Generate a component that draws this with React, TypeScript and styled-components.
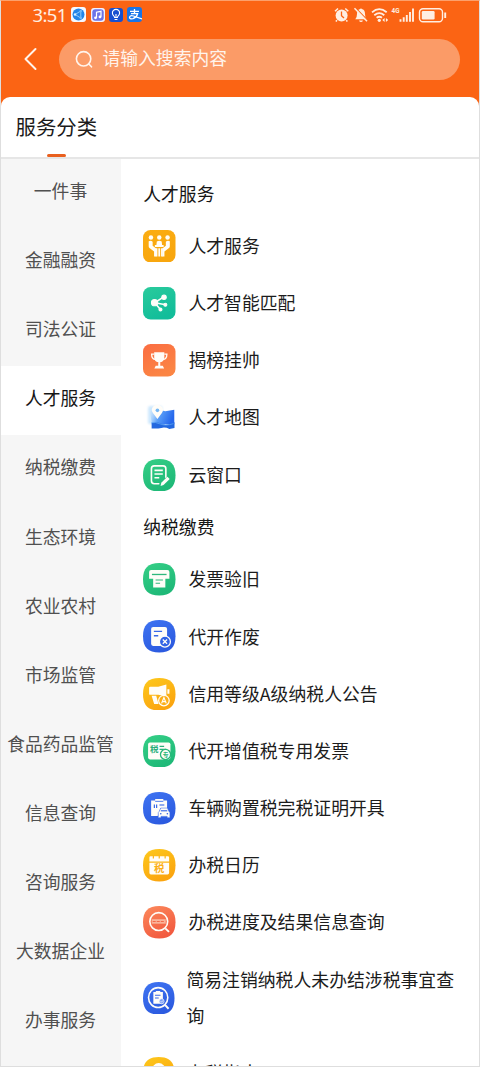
import React from 'react';
import styled, { createGlobalStyle } from 'styled-components';

const Global = createGlobalStyle`
  * { box-sizing: border-box; }
  body { margin: 0; font-family: "Noto Sans CJK SC", "Noto Sans", sans-serif; }
`;

const Screen = styled.div`
  width: 480px;
  height: 1067px;
  overflow: hidden;
  display: flex;
  flex-direction: column;
  background: #fb6414;
  border: 1px solid #dedede;
  border-top-color: #fca06c;
`;

const StatusBar = styled.div`
  height: 29px;
  flex: none;
  display: flex;
  align-items: center;
  justify-content: space-between;
  padding: 0 31px 2px 31.5px;
  color: #ffeee2;
`;

const StatusGroup = styled.div<{ $gap: number }>`
  display: flex;
  align-items: center;
  gap: ${p => p.$gap}px;
  svg { display: block; }
`;

const Clock = styled.span`
  font: 400 18.5px/28px "Noto Sans", sans-serif;
  letter-spacing: -0.6px;
  margin-right: 0;
`;

const SearchRow = styled.div`
  height: 67px;
  flex: none;
  display: flex;
  align-items: flex-start;
  padding: 8.5px 19px 0 20px;
`;

const Back = styled.svg`
  width: 18px;
  height: 24px;
  margin: 8px 19.5px 0 0;
`;

const SearchBox = styled.div`
  flex: 1;
  height: 41px;
  border-radius: 21px;
  background: #fb9b67;
  display: flex;
  align-items: center;
  gap: 9px;
  padding-left: 16px;
  color: #fff4ec;
  font-size: 17.8px;
  line-height: 37px;
`;

const SearchHint = styled.span`
  padding-bottom: 3px;
`;

const Sheet = styled.div`
  flex: 1;
  min-height: 0;
  display: flex;
  flex-direction: column;
  background: #fff;
  border-radius: 9px 9px 0 0;
`;

const TitleBar = styled.div`
  height: 62px;
  flex: none;
  display: flex;
  flex-direction: column;
  justify-content: space-between;
  padding-left: 14.5px;
  border-bottom: 2px solid #e6e6e6;
`;

const Title = styled.div`
  font-size: 20.4px;
  line-height: 58px;
  height: 56px;
  color: #1a1a1a;
`;

const Marker = styled.div`
  width: 19px;
  height: 3px;
  flex: none;
  margin-left: 31px;
  border-radius: 2px;
  background: #e9601f;
`;

const Body = styled.div`
  flex: 1;
  min-height: 0;
  display: flex;
`;

const Sidebar = styled.div`
  width: 120px;
  flex: none;
  background: #f6f6f6;
  overflow: hidden;
`;

const Category = styled.div<{ $active?: boolean }>`
  height: 69.1px;
  padding: 0 1px 7px 0;
  display: flex;
  align-items: center;
  justify-content: center;
  white-space: nowrap;
  font-size: 17.8px;
  color: ${p => (p.$active ? '#161616' : '#505050')};
  background: ${p => (p.$active ? '#fff' : 'transparent')};
`;

const List = styled.div`
  flex: 1;
  min-width: 0;
  overflow: hidden;
  padding: 11px 20px 0 22.3px;
`;

const Heading = styled.div`
  height: 47.5px;
  font-size: 17.8px;
  line-height: 46.5px;
  color: #161616;
`;

const Item = styled.div<{ $wide?: boolean }>`
  display: flex;
  align-items: center;
  gap: ${p => (p.$wide ? 11.6 : 12.6)}px;
  padding: 10.6px 0;
  font-size: 17.85px;
  line-height: 36px;
  color: #1c1c1c;
`;

const Badge = styled.svg<{ $w?: number }>`
  width: ${p => p.$w ?? 32.5}px;
  height: 32.5px;
  flex: none;
  display: block;
`;

const Label = styled.span`
  position: relative;
  top: -1.2px;
`;

type Tone = 'amber' | 'teal' | 'coral' | 'green' | 'blue' | 'yellow' | 'red';
const tones: Record<Tone, [string, string]> = {
  amber: ['#fbad12', '#f8a60e'],
  teal: ['#2acb9c', '#12bd9a'],
  coral: ['#fb6d42', '#fb8544'],
  green: ['#35cf86', '#1fb978'],
  blue: ['#3f74f2', '#2c5be0'],
  yellow: ['#fdc91c', '#fba50f'],
  red: ['#fc8a5c', '#f25b40'],
};

const squircle = 'M16 0C27 0 32 5 32 16S27 32 16 32S0 27 0 16S5 0 16 0Z';

function Icon({ tone, square, narrow, children }: { tone: Tone; square?: boolean; narrow?: boolean; children: React.ReactNode }) {
  const id = `g-${tone}`;
  return (
    <Badge viewBox="0 0 32 32" $w={narrow ? 31.5 : 32.5} preserveAspectRatio="none">
      <defs>
        <linearGradient id={id} x1="0" y1="0" x2="0.5" y2="1">
          <stop offset="0" stopColor={tones[tone][0]} />
          <stop offset="1" stopColor={tones[tone][1]} />
        </linearGradient>
      </defs>
      {square ? <rect width="32" height="32" rx="7.5" fill={`url(#${id})`} /> : <path d={squircle} fill={`url(#${id})`} />}
      {children}
    </Badge>
  );
}

const W = '#fffdf8';

const PeopleIcon = () => (
  <Icon tone="amber" square>
    <g fill={W}>
      <circle cx="7.8" cy="7.4" r="2.2" /><circle cx="16" cy="7.4" r="2.2" /><circle cx="24.2" cy="7.4" r="2.2" />
      <path d="M5.6 11Q7.8 9.8 9.5 11.5V15.5L13 18.3V26H10.9V21.2L6.4 17.7Q5.6 17 5.6 16Z" />
      <path d="M26.4 11Q24.2 9.8 22.5 11.5V15.5L19 18.3V26H21.1V21.2L25.6 17.7Q26.4 17 26.4 16Z" />
      <path d="M13.6 11.4Q16 9.6 18.4 11.4L18.8 14.8H20.3V16.8H11.7V14.8H13.2Z" />
      <path d="M12.6 18H14.2V26H12.6ZM15.1 18H16.9V26H15.1ZM17.8 18H19.4V26H17.8Z" />
    </g>
  </Icon>
);

const ShareIcon = () => (
  <Icon tone="teal" square>
    <g fill={W} stroke={W}>
      <path d="M11.5 15.5L20.5 9.7M11.5 15.5L21 17.3M11.5 15.5L17 22" strokeWidth="1.6" />
      <circle cx="11.4" cy="15.4" r="3.1" /><circle cx="20.7" cy="10" r="2.2" />
      <circle cx="22" cy="17.5" r="1.5" /><circle cx="17.2" cy="22.2" r="1.5" />
    </g>
  </Icon>
);

const TrophyIcon = () => (
  <Icon tone="coral" square>
    <path d="M11 8.2H21V13Q21 18 16 18T11 13ZM15 17.5H17V21.5H15ZM12.5 21.3H19.5L20.8 24H11.2Z" fill={W} />
    <path d="M11 10H8.5Q8.5 15 12.3 15M21 10H23.5Q23.5 15 19.7 15" fill="none" stroke={W} strokeWidth="1.3" />
  </Icon>
);

const MapIcon = () => (
  <Badge viewBox="0 0 32 32">
    <defs>
      <linearGradient id="map" x1="0" y1="0" x2="1" y2="0.3">
        <stop offset="0" stopColor="#c9e7ff" stopOpacity="0.3" />
        <stop offset="0.45" stopColor="#5a9ff8" />
        <stop offset="1" stopColor="#2567ec" />
      </linearGradient>
      <filter id="halo"><feGaussianBlur stdDeviation="1.2" /></filter>
    </defs>
    <rect x="5" y="5" width="14" height="18" rx="2" fill="#b4dcfc" opacity=".65" filter="url(#halo)" />
    <path d="M7 10L13 8L22 10.2L30.8 8.5V23L22 23L9 25Z" fill="url(#map)" />
    <path d="M8.5 21.5Q13 20 17 22T25 23L31 21V26.5L26 27.5Q22 25.5 18 26.5T8.5 27Z" fill="#2368df" />
    <path d="M8 21.4Q12 20.4 17 22.6T30 22.3" fill="none" stroke="#6db6fb" strokeWidth=".6" />
    <path d="M14.2 17.8L9.8 11.9A5.3 5.3 0 1 1 18.6 11.9Z" fill={W} />
    <circle cx="14.2" cy="9.2" r="1.8" fill="#75b7f4" />
  </Badge>
);

const NoteIcon = () => (
  <Icon tone="green">
    <path d="M22.5 18V9.5Q22.5 6.8 19.8 6.8H11Q8.3 6.8 8.3 9.5V21.5Q8.3 24.4 11 24.4H15.5" fill="none" stroke={W} strokeWidth="1.6" strokeLinecap="round" />
    <path d="M11.3 11.2H19.5M11.3 14.8H19.5M11.3 18.4H16" stroke={W} strokeWidth="1.5" />
    <path d="M17.3 26.6L18 23.4L24 17.4L26.3 19.7L20.2 25.7Z" fill={W} />
  </Icon>
);

const PrinterIcon = () => (
  <Icon tone="green">
    <path d="M8 6.8H24Q26 6.8 26 8.8V15.5H22V24H10V15.5H6V8.8Q6 6.8 8 6.8Z" fill={W} />
    <path d="M8.8 11.3H23.2" stroke="#30b87d" strokeWidth="1.3" />
    <path d="M12.4 16.8H19.6M12.4 20H16.8" stroke="#30b87d" strokeWidth="1.1" />
  </Icon>
);

const VoidIcon = () => (
  <Icon tone="blue">
    <path d="M10 6.8H21.7Q23.7 6.8 23.7 8.8V25.5H10Q8 25.5 8 23.5V8.8Q8 6.8 10 6.8Z" fill={W} />
    <path d="M10.7 11.2H18.8M10.7 15.5H15" stroke="#3868e8" strokeWidth="1.3" />
    <circle cx="21.6" cy="21.3" r="5.4" fill="#3263e5" stroke={W} strokeWidth="1.2" />
    <path d="M19.5 19.2L23.7 23.4M23.7 19.2L19.5 23.4" stroke={W} strokeWidth="1.3" />
  </Icon>
);

const MegaphoneIcon = () => (
  <Icon tone="yellow">
    <path d="M7.2 8.5H15L23 6.3V18.2L15 16.6H7.2Q6 16.6 6 15.4V9.7Q6 8.5 7.2 8.5ZM24 11H26V15.5H24ZM8.5 17.5H13L15.3 25.5H11Z" fill={W} />
    <circle cx="20.6" cy="22.2" r="5.2" fill="#fcaf18" stroke={W} strokeWidth="1.2" />
    <path d="M18.3 25L20.6 19.3L22.9 25M19.1 23.2H22.1" stroke={W} strokeWidth="1.2" fill="none" />
  </Icon>
);

const IconText = styled.text`
  font-family: "Noto Sans CJK SC", sans-serif;
  font-weight: 700;
`;

const InvoiceIcon = () => (
  <Icon tone="green">
    <rect x="5" y="7.3" width="22" height="16.7" rx="1.8" fill={W} />
    <IconText x="7" y="17" fontSize="8.4" fill="#2aaf7b">税</IconText>
    <path d="M16.3 11.2H20.8M16.3 14.2H23" stroke="#2aaf7b" strokeWidth="1.3" />
    <circle cx="22.2" cy="19.2" r="5" fill={W} stroke="#27b779" strokeWidth="1.3" />
    <IconText x="19.4" y="21.4" fontSize="5.7" fill="#27b779">专</IconText>
  </Icon>
);

const CarIcon = () => (
  <Icon tone="blue">
    <path d="M8 8.3H12V6.8H20V8.3H23.7V16H17L14.5 23.7H8Z" fill={W} />
    <path d="M12 9.2H20" stroke="#4f7fee" strokeWidth="1" />
    <path d="M11.2 12.2V15.8M13.4 12.2V15.8" stroke="#386bea" strokeWidth="1.2" />
    <path d="M16.2 12.8H21" stroke="#386bea" strokeWidth="1.1" />
    <path d="M16 19L17.5 15.8H24L25.5 19L26.5 20.3V25.3H23.8V24H17.7V25.3H15V20.3Z" fill={W} stroke="#3263e5" strokeWidth=".5" />
    <path d="M17.6 18.5H23.9" stroke="#3263e5" strokeWidth="1.1" />
    <circle cx="17.5" cy="21.4" r=".8" fill="#3263e5" /><circle cx="24" cy="21.4" r=".8" fill="#3263e5" />
  </Icon>
);

const CalendarIcon = () => (
  <Icon tone="yellow">
    <path d="M6.3 8.3Q6.3 7.2 7.4 7.2H24.5Q25.7 7.2 25.7 8.3V12.2H6.3ZM6.3 13.5H25.7V23.5Q25.7 25 24.2 25H7.8Q6.3 25 6.3 23.5Z" fill={W} />
    <path d="M10.2 6V9.4M16 6V9.4M21.8 6V9.4" stroke="#fcb714" strokeWidth="1.2" />
    <IconText x="10.9" y="23" fontSize="10.2" fill="#fbaf17">税</IconText>
  </Icon>
);

const ProgressIcon = () => (
  <Icon tone="red">
    <circle cx="15.5" cy="15.3" r="8.8" fill="none" stroke={W} strokeWidth="1.6" />
    <path d="M22 22L25.6 25.5" stroke={W} strokeWidth="1.9" />
    <rect x="8.6" y="13" width="13.8" height="4.4" fill="#fbb49a" />
    <path d="M9.5 15.2H21.5" stroke="#f36a4b" strokeWidth="1" strokeDasharray="3 1" />
  </Icon>
);

const CancelIcon = () => (
  <Icon tone="blue" narrow>
    <circle cx="15.4" cy="15.3" r="9.8" fill="none" stroke={W} strokeWidth="1.6" />
    <path d="M22.3 22.5L26 26.3" stroke={W} strokeWidth="2" />
    <path d="M10.5 9.8H13V8.8H17.5V9.8H20.2V21.4H10.5Z" fill={W} />
    <path d="M12.2 13H17.8M12.2 15.8H16" stroke="#3868e8" strokeWidth="1.1" />
    <circle cx="19" cy="19" r="2.5" fill="#7ca0f5" stroke={W} strokeWidth=".6" />
    <path d="M17.9 19L18.8 19.9L20.2 18.2" stroke={W} strokeWidth=".7" fill="none" />
  </Icon>
);

const GuideIcon = () => (
  <Icon tone="yellow" narrow>
    <circle cx="16" cy="13" r="7" fill={W} />
  </Icon>
);

const categories = ['一件事', '金融融资', '司法公证', '人才服务', '纳税缴费', '生态环境', '农业农村', '市场监管', '食品药品监管', '信息查询', '咨询服务', '大数据企业', '办事服务'];

type Entry = { label: string; icon: React.ReactNode; wide?: boolean };
const groups: { name: string; entries: Entry[] }[] = [
  {
    name: '人才服务',
    entries: [
      { label: '人才服务', icon: <PeopleIcon /> },
      { label: '人才智能匹配', icon: <ShareIcon /> },
      { label: '揭榜挂帅', icon: <TrophyIcon /> },
      { label: '人才地图', icon: <MapIcon /> },
      { label: '云窗口', icon: <NoteIcon /> },
    ],
  },
  {
    name: '纳税缴费',
    entries: [
      { label: '发票验旧', icon: <PrinterIcon /> },
      { label: '代开作废', icon: <VoidIcon /> },
      { label: '信用等级A级纳税人公告', icon: <MegaphoneIcon /> },
      { label: '代开增值税专用发票', icon: <InvoiceIcon /> },
      { label: '车辆购置税完税证明开具', icon: <CarIcon /> },
      { label: '办税日历', icon: <CalendarIcon /> },
      { label: '办税进度及结果信息查询', icon: <ProgressIcon /> },
      { label: '简易注销纳税人未办结涉税事宜查询', icon: <CancelIcon />, wide: true },
      { label: '办税指南', icon: <GuideIcon /> },
    ],
  },
];

const AppBadges = () => (
  <>
    <svg width="15" height="15" viewBox="0 0 15 15">
      <rect width="15" height="15" rx="3" fill="#f4f8ff" />
      <circle cx="7.5" cy="7.5" r="6" fill="#2385e8" />
      <path d="M4 7.5L9.8 4V11Z" fill="none" stroke="#9bd0fb" strokeWidth=".9" />
      <circle cx="4" cy="7.5" r="1.2" fill="#d8efff" /><circle cx="9.8" cy="4" r="1.2" fill="#71b9f5" /><circle cx="9.8" cy="11" r="1.2" fill="#71b9f5" />
    </svg>
    <svg width="14" height="14" viewBox="0 0 14 14">
      <rect width="14" height="14" rx="3" fill="#f2f2ff" />
      <rect x="1.3" y="1.3" width="11.4" height="11.4" rx="3" fill="#6c73e8" />
      <path d="M5.5 9.7V4.2L10 3.3V8.8" fill="none" stroke="#fff" strokeWidth="1.2" />
      <circle cx="4.5" cy="9.8" r="1.4" fill="#fff" /><circle cx="9" cy="8.9" r="1.4" fill="#fff" />
    </svg>
    <svg width="14" height="14" viewBox="0 0 14 14">
      <rect width="14" height="14" rx="3" fill="#164fd0" />
      <path d="M5.6 9.5Q5.6 8.7 4.5 7.6A3.6 3.6 0 1 1 9.5 7.6Q8.4 8.7 8.4 9.5Z" fill="none" stroke="#fff" strokeWidth="1.1" />
      <path d="M5.6 11.5H8.4M7 6V9" stroke="#fff" strokeWidth="1.1" />
    </svg>
    <svg width="15" height="15" viewBox="0 0 15 15">
      <rect width="15" height="15" rx="3" fill="#1775e8" />
      <path d="M3 4.4H12M7.5 2V6.7M4 6.7H10.6Q9.5 10.5 6 11.7Q2.5 12.3 2.5 10.3Q3 8 6.5 9L15 12" fill="none" stroke="#fff" strokeWidth="1.3" />
    </svg>
  </>
);

const SystemIcons = () => (
  <svg width="114" height="18" viewBox="0 0 114 18" fill="none" stroke="#ffeee2">
    <circle cx="7.6" cy="9.4" r="6" fill="#ffeee2" stroke="none" />
    <path d="M1 5.3L4 2.5M11.3 2.5L14.3 5.3M3 14.2L1.8 15.6M12.2 14.2L13.4 15.6" strokeWidth="1.5" />
    <path d="M7.5 5.5V9.6L10 12" stroke="#fb6414" strokeWidth="1.3" />
    <path d="M21.3 13.2Q23 11.5 23 8Q23 4 25.6 3.2Q27 1.6 28.4 3.2Q31 4 31 8Q31 11.5 32.6 13.2Z" fill="#ffeee2" stroke="none" />
    <path d="M25 14.4H29Q28.5 16 27 16T25 14.4Z" fill="#ffeee2" stroke="none" />
    <path d="M21.8 2.1L34 14.6" stroke="#fb6414" strokeWidth="1.3" />
    <path d="M20.5 2.3L33 15.2" strokeWidth="1.5" />
    <path d="M38 6.3Q45.2 -.1 52.7 6.3M40.3 9.2Q45.3 5 50.3 9.2M42.6 11.8Q45.3 9.7 48 11.8" strokeWidth="1.8" />
    <circle cx="45.3" cy="14.3" r="1.6" fill="#ffeee2" stroke="none" />
    <path d="M48.3 14L50.6 12V16ZM54.2 14L51.9 12V16Z" fill="#ffeee2" stroke="none" />
    <text x="57.6" y="7.3" fontSize="7.2" fontWeight="700" fill="#ffeee2" stroke="none" fontFamily="Roboto, sans-serif" textLength="8" lengthAdjust="spacingAndGlyphs">4G</text>
    <path d="M66.5 13.3V15.7M69.7 11.3V15.7M72.8 9V15.7M76 6V15.7M79 2.5V15.7" strokeWidth="1.9" />
    <rect x="85.5" y="2.7" width="23" height="13" rx="3.5" strokeWidth="1.4" />
    <rect x="87.8" y="5" width="12.8" height="8.4" rx="1.2" fill="#ffeee2" stroke="none" />
    <path d="M111.2 6.5V12" strokeWidth="1.9" />
  </svg>
);

export default function App() {
  return (
    <>
      <Global />
      <Screen>
        <StatusBar>
          <StatusGroup $gap={4.4}>
            <Clock>3:51</Clock>
            <AppBadges />
          </StatusGroup>
          <StatusGroup $gap={0}>
            <SystemIcons />
          </StatusGroup>
        </StatusBar>
        <SearchRow>
          <Back viewBox="0 0 18 24">
            <path d="M14.5 2L4.5 12L14.5 22" fill="none" stroke="#fff4ec" strokeWidth="2" strokeLinecap="round" strokeLinejoin="round" />
          </Back>
          <SearchBox>
            <svg width="19" height="19" viewBox="0 0 19 19" fill="none" stroke="#fff4ec" strokeWidth="1.6" strokeLinecap="round">
              <circle cx="8.6" cy="8.8" r="7.2" />
              <path d="M13.8 14L16.5 16.8" />
            </svg>
            <SearchHint>请输入搜索内容</SearchHint>
          </SearchBox>
        </SearchRow>
        <Sheet>
          <TitleBar>
            <Title>服务分类</Title>
            <Marker />
          </TitleBar>
          <Body>
            <Sidebar>
              {categories.map(name => (
                <Category key={name} $active={name === '人才服务'}>{name}</Category>
              ))}
            </Sidebar>
            <List>
              {groups.map(group => (
                <React.Fragment key={group.name}>
                  <Heading>{group.name}</Heading>
                  {group.entries.map(entry => (
                    <Item key={entry.label} $wide={entry.wide}>
                      {entry.icon}
                      <Label>{entry.label}</Label>
                    </Item>
                  ))}
                </React.Fragment>
              ))}
            </List>
          </Body>
        </Sheet>
      </Screen>
    </>
  );
}
